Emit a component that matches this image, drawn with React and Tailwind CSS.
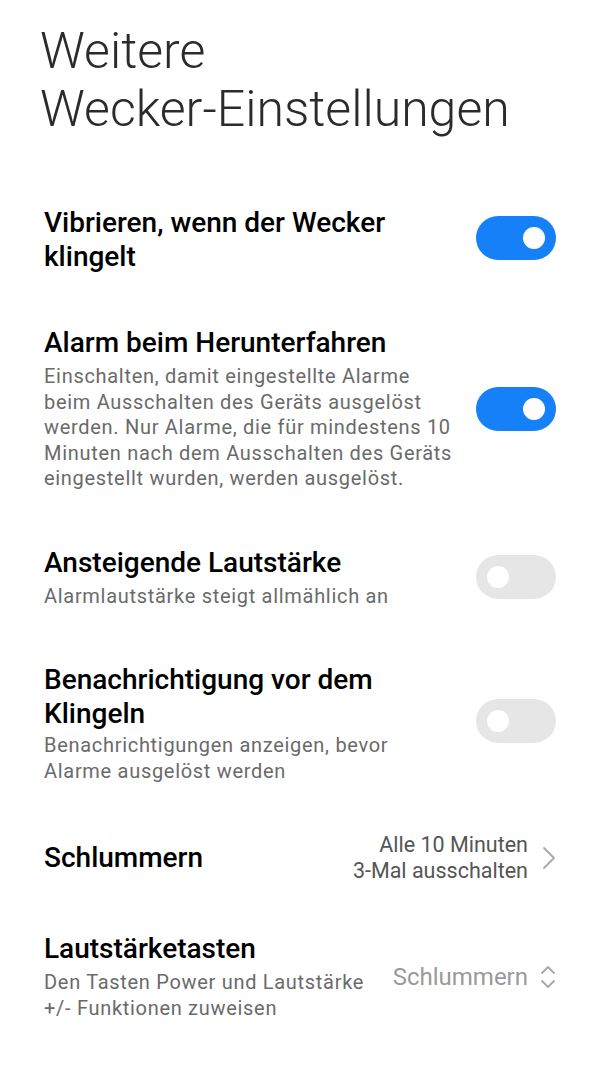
import React from "react";

function Toggle({ on }) {
  return (
    <div
      className={
        "shrink-0 w-[80px] h-[44px] rounded-full flex items-center px-[11px] " +
        (on ? "bg-[#1580f7] justify-end" : "bg-[#e6e6e6] justify-start")
      }
    >
      <div className="w-[22px] h-[22px] rounded-full bg-white" />
    </div>
  );
}

function Title({ children }) {
  return (
    <div className="text-[28px] leading-[34px] font-medium text-black">{children}</div>
  );
}

function Desc({ children, tight }) {
  return (
    <div
      className={
        "text-[20px] leading-[25.5px] tracking-[0.7px] text-[#6a6a6a] " +
        (tight ? "mt-[2px]" : "mt-[4px]")
      }
    >
      {children}
    </div>
  );
}

export default function App() {
  return (
    <div
      className="w-[601px] h-[1080px] bg-white overflow-hidden"
      style={{ fontFamily: "Roboto, 'Noto Sans', sans-serif" }}
    >
      <div className="pl-[40px] pt-[22px] pb-[39px] text-[50px] leading-[58px] font-light text-[#2b2b2b]">
        Weitere
        <br />
        Wecker-Einstellungen
      </div>

      <div className="flex items-center pl-[44px] pr-[45px] pt-[25px] pb-[25px]">
        <div className="flex-1 min-w-0 pt-[4px]">
          <Title>
            Vibrieren, wenn der Wecker
            <br />
            klingelt
          </Title>
        </div>
        <Toggle on />
      </div>

      <div className="flex items-center pl-[44px] pr-[45px] py-[27px]">
        <div className="flex-1 min-w-0">
          <Title>Alarm beim Herunterfahren</Title>
          <Desc>
            Einschalten, damit eingestellte Alarme
            <br />
            beim Ausschalten des Geräts ausgelöst
            <br />
            werden. Nur Alarme, die für mindestens 10
            <br />
            Minuten nach dem Ausschalten des Geräts
            <br />
            eingestellt wurden, werden ausgelöst.
          </Desc>
        </div>
        <Toggle on />
      </div>

      <div className="flex items-center pl-[44px] pr-[45px] py-[27px]">
        <div className="flex-1 min-w-0">
          <Title>Ansteigende Lautstärke</Title>
          <Desc>Alarmlautstärke steigt allmählich an</Desc>
        </div>
        <Toggle on={false} />
      </div>

      <div className="flex items-center pl-[44px] pr-[45px] py-[27px]">
        <div className="flex-1 min-w-0">
          <Title>
            Benachrichtigung vor dem
            <br />
            Klingeln
          </Title>
          <Desc tight>
            Benachrichtigungen anzeigen, bevor
            <br />
            Alarme ausgelöst werden
          </Desc>
        </div>
        <div className="-mt-[5px]">
          <Toggle on={false} />
        </div>
      </div>

      <div className="flex items-center pl-[44px] pr-[45px] pt-[21px] pb-[21px]">
        <div className="flex-1 min-w-0">
          <Title>Schlummern</Title>
        </div>
        <div className="flex items-center">
          <div className="text-right text-[21.5px] leading-[26px] text-[#555555]">
            Alle 10 Minuten
            <br />
            3-Mal ausschalten
          </div>
          <svg
            width="14"
            height="24"
            viewBox="0 0 14 24"
            className="ml-[14px]"
            fill="none"
            stroke="#a8a8a8"
            strokeWidth="1.8"
            strokeLinecap="round"
            strokeLinejoin="round"
          >
            <path d="M2 2 L12 12 L2 22" />
          </svg>
        </div>
      </div>

      <div className="flex items-center pl-[44px] pr-[45px] py-[27px]">
        <div className="flex-1 min-w-0">
          <Title>Lautstärketasten</Title>
          <Desc>
            Den Tasten Power und Lautstärke
            <br />
            +/- Funktionen zuweisen
          </Desc>
        </div>
        <div className="flex items-center">
          <div className="text-[24px] leading-[28px] text-[#9a9a9a]">Schlummern</div>
          <svg
            width="16"
            height="26"
            viewBox="0 0 16 26"
            className="ml-[12px]"
            fill="none"
            stroke="#a8a8a8"
            strokeWidth="1.8"
            strokeLinecap="round"
            strokeLinejoin="round"
          >
            <path d="M2 9 L8 3 L14 9" />
            <path d="M2 17 L8 23 L14 17" />
          </svg>
        </div>
      </div>
    </div>
  );
}
